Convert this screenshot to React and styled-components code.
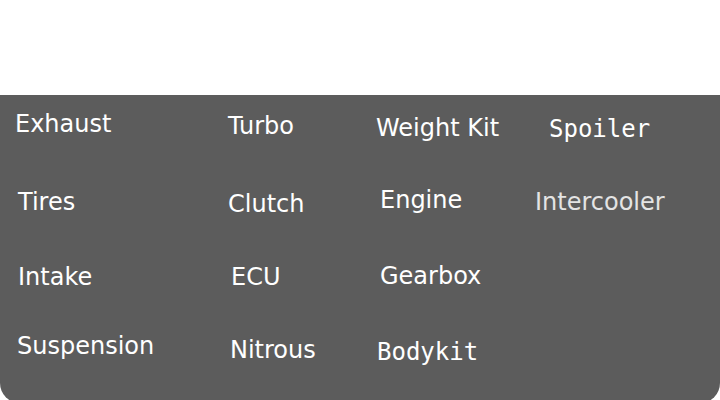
import React from "react";
import styled, { createGlobalStyle } from "styled-components";

const Global = createGlobalStyle`
  html, body {
    margin: 0;
    padding: 0;
    background: #ffffff;
    overflow: hidden;
  }
  body {
    font-family: "DejaVu Sans", Verdana, sans-serif;
  }
`;

const Page = styled.div`
  width: 720px;
  display: flex;
  flex-direction: column;
`;

const TopSpace = styled.div`
  height: 95px;
  background: #ffffff;
`;

const Panel = styled.div`
  height: 308px;
  background: #5c5c5c;
  border-radius: 0 0 20px 20px;
  box-sizing: border-box;
  padding: 16px 0 0 14px;
  display: grid;
  grid-template-columns: 214px 148px 158px 1fr;
  grid-template-rows: 76px 76px 72px 1fr;
  align-items: start;
`;

const Label = styled.span`
  font-family: ${(p) =>
    p.$mono
      ? `"DejaVu Sans Mono", "Liberation Mono", monospace`
      : `"DejaVu Sans", Verdana, sans-serif`};
  font-size: 24px;
  line-height: 28px;
  color: ${(p) => (p.$muted ? "#e4e4e4" : "#ffffff")};
  white-space: nowrap;
  margin-left: ${(p) => p.$dx || 0}px;
  margin-top: ${(p) => p.$dy || 0}px;
  grid-column: ${(p) => p.$col};
  grid-row: ${(p) => p.$row};
`;

const items = [
  { t: "Exhaust", col: 1, row: 1, dx: 1, dy: -1 },
  { t: "Turbo", col: 2, row: 1, dx: 0, dy: 1 },
  { t: "Weight Kit", col: 3, row: 1, dx: 0, dy: 3 },
  { t: "Spoiler", col: 4, row: 1, dx: 15, dy: 4, mono: true },
  { t: "Tires", col: 1, row: 2, dx: 4, dy: 1 },
  { t: "Clutch", col: 2, row: 2, dx: 0, dy: 3 },
  { t: "Engine", col: 3, row: 2, dx: 4, dy: -1 },
  { t: "Intercooler", col: 4, row: 2, dx: 1, dy: 1, muted: true },
  { t: "Intake", col: 1, row: 3, dx: 4, dy: 0 },
  { t: "ECU", col: 2, row: 3, dx: 3, dy: 0 },
  { t: "Gearbox", col: 3, row: 3, dx: 4, dy: -1 },
  { t: "Suspension", col: 1, row: 4, dx: 3, dy: -3 },
  { t: "Nitrous", col: 2, row: 4, dx: 2, dy: 1 },
  { t: "Bodykit", col: 3, row: 4, dx: 1, dy: 3, mono: true },
];

export default function App() {
  return (
    <Page>
      <Global />
      <TopSpace />
      <Panel>
        {items.map((it) => (
          <Label
            key={it.t}
            $col={it.col}
            $row={it.row}
            $dx={it.dx}
            $dy={it.dy}
            $mono={it.mono}
            $muted={it.muted}
          >
            {it.t}
          </Label>
        ))}
      </Panel>
    </Page>
  );
}
